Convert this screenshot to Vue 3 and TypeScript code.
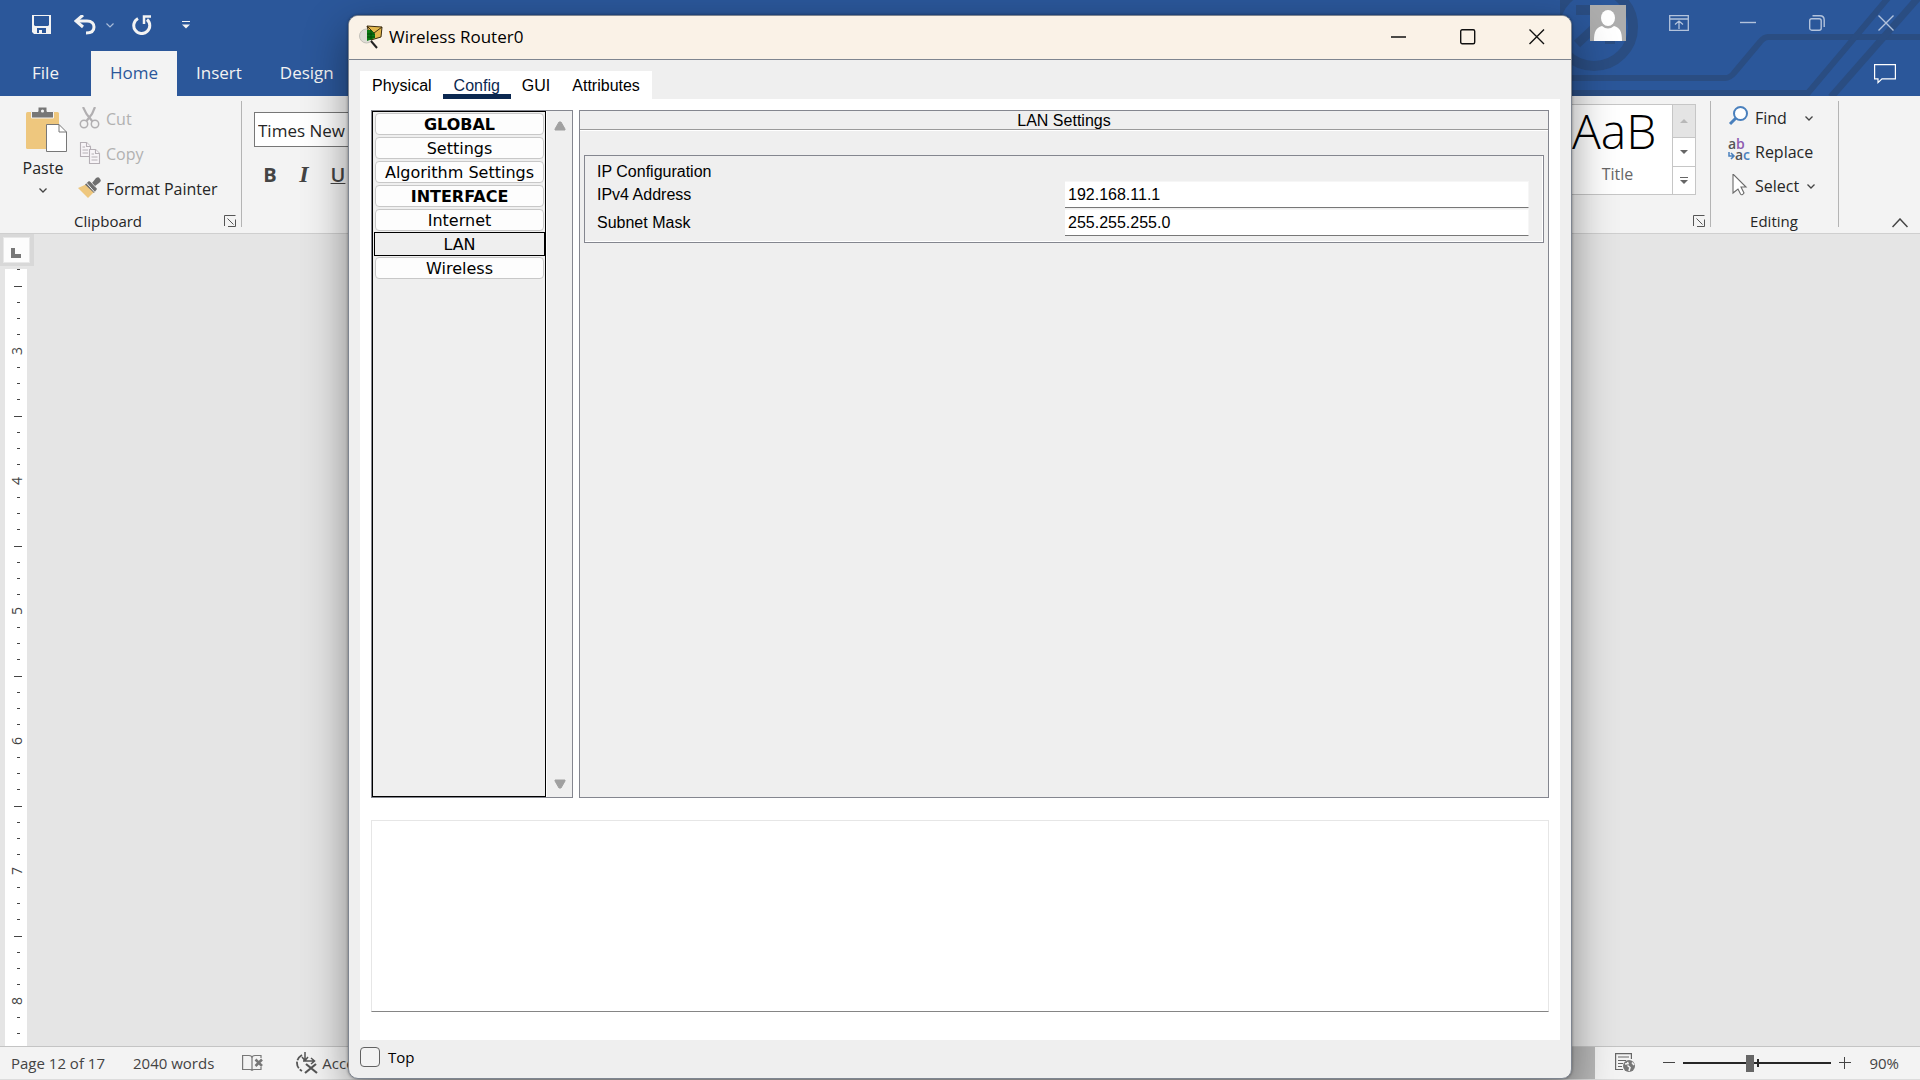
<script setup lang="ts">
import { ref } from 'vue'

const ribbonTabs = ['File', 'Home', 'Insert', 'Design']
const activeRibbonTab = ref('Home')

const rulerNumbers = [3, 4, 5, 6, 7, 8]
const zoomPosition = ref(45)

const dialogTabs = ['Physical', 'Config', 'GUI', 'Attributes']
const activeDialogTab = ref('Config')

interface Section {
  name: string
  heading?: boolean
}
const sections: Section[] = [
  { name: 'GLOBAL', heading: true },
  { name: 'Settings' },
  { name: 'Algorithm Settings' },
  { name: 'INTERFACE', heading: true },
  { name: 'Internet' },
  { name: 'LAN' },
  { name: 'Wireless' },
]
const activeSection = ref('LAN')

const ipv4Address = ref('192.168.11.1')
const subnetMask = ref('255.255.255.0')
const consoleText = ref('')
const keepOnTop = ref(false)
</script>

<template>
  <div class="desktop">
    <div class="word">
      <header class="word-header">
        <svg class="decor" width="360" height="96" viewBox="0 0 360 96" fill="none" stroke="#2a4d82" aria-hidden="true">
          <circle cx="34" cy="27" r="39" stroke-width="10" />
          <path d="M16 10H30" stroke-width="10" />
          <path d="M17 44L45 18" stroke-width="9" />
          <path d="M50 40V44" stroke-width="10" />
          <path d="M0 78H165Q170 78 174 73L200 42Q204 37 208 37H360" stroke-width="6" />
          <path d="M0 93H248L328 -2" stroke-width="6" />
          <path d="M271 97L358 -2" stroke-width="7" />
        </svg>
        <div class="title-row">
          <div class="quick">
            <button class="qa save" aria-label="Save">
              <svg width="20" height="20" viewBox="0 0 20 20"><path d="M0 0H19V19H2L0 17Z" fill="#f3f3f3" /><path d="M2 1H17V10L16 11H3L2 10Z" fill="#2b579a" /><path d="M5 13H14V18H10V15H7V18H5Z" fill="#2b579a" /></svg>
            </button>
            <button class="qa undo" aria-label="Undo">
              <svg width="22" height="20" viewBox="0 0 22 20" fill="none" stroke="#f3f3f3" stroke-width="3"><path d="M2 6H13C18 6 20 9 20 12C20 16 17 18 12 18" /><path d="M9 0L2 6L9 12" /></svg>
            </button>
            <button class="qa undo-more" aria-label="Undo options">
              <svg width="8" height="5" viewBox="0 0 8 5" fill="none" stroke="#a9bcd9" stroke-width="1.2"><path d="M.5 .5L4 4L7.500 .5" /></svg>
            </button>
            <button class="qa redo" aria-label="Repeat">
              <svg width="20" height="20" viewBox="0 0 20 20" fill="none" stroke="#f3f3f3" stroke-width="3"><path d="M6 3.500A8 8 0 1 0 15 4.500" /><path d="M19 1.500H12V9" stroke-width="2.500" /></svg>
            </button>
            <button class="qa customize" aria-label="Customize toolbar">
              <svg width="8" height="8" viewBox="0 0 8 8" fill="#f3f3f3"><path d="M0 0H8V1H0ZM0 3.500H8L4 7.500Z" /></svg>
            </button>
          </div>
          <div class="account">
            <svg class="avatar" width="36" height="36" viewBox="0 0 36 36"><path d="M0 0H36V36H0Z" fill="#adadad" /><ellipse cx="18" cy="13" rx="7" ry="8" fill="#fff" /><path d="M4 36C4 26 6 23 12 21Q18 26 24 21C30 23 32 26 32 36Z" fill="#fff" /></svg>
            <button class="win" aria-label="Ribbon display options">
              <svg width="20" height="16" viewBox="0 0 20 16" fill="none" stroke="#b3c3dc" stroke-width="1.300"><path d="M.7 .7H19.300V15.300H.7ZM.7 4H19.300M10 14V6M6 9.500L10 6L14 9.500" /></svg>
            </button>
            <button class="win" aria-label="Minimize">
              <svg width="16" height="16" viewBox="0 0 16 16" stroke="#b3c3dc" stroke-width="1.400"><path d="M0 7.500H16" /></svg>
            </button>
            <button class="win" aria-label="Restore">
              <svg width="16" height="16" viewBox="0 0 16 16" fill="none" stroke="#b3c3dc" stroke-width="1.400"><rect x=".7" y="3.700" width="11.500" height="11.500" rx="2" /><path d="M3.500 .8H11Q15.200 .8 15.200 5V12" /></svg>
            </button>
            <button class="win" aria-label="Close">
              <svg width="16" height="16" viewBox="0 0 16 16" stroke="#b3c3dc" stroke-width="1.400"><path d="M.5 .5L15.500 15.500M15.500 .5L.5 15.500" /></svg>
            </button>
          </div>
        </div>
        <nav class="ribbon-tabs">
          <button
            v-for="tab in ribbonTabs"
            :key="tab"
            class="ribbon-tab"
            :class="[tab.toLowerCase(), { active: tab === activeRibbonTab }]"
            @click="activeRibbonTab = tab"
          >{{ tab }}</button>
          <button class="comments" aria-label="Comments">
            <svg width="22" height="20" viewBox="0 0 22 20" fill="none" stroke="#fff" stroke-width="1.200"><path d="M.6 .6H21.400V14.800H8L4 18.600V14.800H.6Z" /></svg>
          </button>
        </nav>
      </header>

      <section class="ribbon">
        <div class="group clipboard">
          <div class="group-main">
            <button class="paste">
              <svg width="42" height="46" viewBox="0 0 42 46"><rect x="0" y="5" width="33" height="37" rx="1.500" fill="#eec77e" /><path d="M5.500 11V4.500H12V0H21V4.500H27.500V11Z" fill="#777" stroke="#f3f3f3" stroke-width="1" /><circle cx="16.500" cy="4" r="1.600" fill="#f3f3f3" /><path d="M20.500 17.500H33L40.500 25V44.500H20.500Z" fill="#fff" stroke="#777" /><path d="M33 17.500V25H40.500" fill="none" stroke="#777" /></svg>
              <span>Paste</span>
              <svg width="8" height="5" viewBox="0 0 8 5" fill="none" stroke="#444" stroke-width="1.300"><path d="M.5 .5L4 4L7.500 .5" /></svg>
            </button>
            <div class="commands">
              <button class="command" disabled>
                <svg width="24" height="24" viewBox="0 0 24 24" fill="none" stroke="#b1afb1" stroke-width="1.500"><circle cx="6" cy="17" r="3.700" /><circle cx="17" cy="17" r="3.700" /><path d="M5 0L8.500 7L14.500 14.500" stroke-width="2.200" /><path d="M17 0L14 7L8.500 14" stroke-width="2.200" /></svg>
                Cut
              </button>
              <button class="command" disabled>
                <svg width="24" height="24" viewBox="0 0 24 24" fill="#f7f4f7" stroke="#b5afb5" stroke-width="1.100"><path d="M2.500 .5H8.500L12.500 4.500V14.500H2.500Z" /><path d="M8.500 .5V4.500H12.500M4.500 5H7M4.500 8H10M4.500 11H10" /><path d="M11.500 7.500H17.500L21.500 11.500V21.500H11.500Z" /><path d="M17.500 7.500V11.500H21.500M13.500 12H16M13.500 15H19.500M13.500 18H19.500" /></svg>
                Copy
              </button>
              <button class="command">
                <svg width="24" height="24" viewBox="0 0 24 24"><path d="M0 11L9 7L16 15L10 21Z" fill="#eec77e" /><path d="M7 7.500L11 4L14 6L18 1Q21 -1 22 2Q24 4 21 6L17 9L19 12L16 16Z" fill="#6f6f6f" /><path d="M8.500 6L17 15.500" stroke="#f3f3f3" stroke-width="1" /><path d="M13 5L18 10.500" stroke="#f3f3f3" stroke-width=".8" /></svg>
                Format Painter
              </button>
            </div>
          </div>
          <footer class="group-name">
            <span>Clipboard</span>
            <button class="launcher" aria-label="Clipboard options">
              <svg width="12" height="12" viewBox="0 0 12 12" fill="none" stroke="#555"><path d="M.5 11V.5H11.500M3.500 3.500L9.500 9.500" /><path d="M4 11.500H11.500V4.500" /></svg>
            </button>
          </footer>
        </div>

        <div class="group font">
          <input class="font-name" value="Times New Roman" aria-label="Font name" />
          <div class="styles-row">
            <button class="fmt bold">B</button>
            <button class="fmt italic">I</button>
            <button class="fmt underline">U</button>
          </div>
        </div>

        <div class="group styles">
          <div class="gallery">
            <button class="style-tile">
              <span class="preview">AaB</span>
              <span class="style-name">Title</span>
            </button>
            <div class="gallery-nav">
              <button class="nav-up" disabled aria-label="Previous styles"><svg width="8" height="4" viewBox="0 0 8 4" fill="#b8b8b8"><path d="M4 0L8 4H0Z" /></svg></button>
              <button aria-label="Next styles"><svg width="8" height="4" viewBox="0 0 8 4" fill="#666"><path d="M0 0H8L4 4Z" /></svg></button>
              <button aria-label="All styles"><svg width="8" height="7" viewBox="0 0 8 7" fill="#666"><path d="M0 0H8V1H0ZM0 3H8L4 7Z" /></svg></button>
            </div>
          </div>
          <footer class="group-name">
            <button class="launcher" aria-label="Style options">
              <svg width="12" height="12" viewBox="0 0 12 12" fill="none" stroke="#555"><path d="M.5 11V.5H11.500M3.500 3.500L9.500 9.500" /><path d="M4 11.500H11.500V4.500" /></svg>
            </button>
          </footer>
        </div>

        <div class="group editing">
          <div class="commands">
            <button class="command">
              <svg width="24" height="24" viewBox="0 0 24 24" fill="none" stroke="#4a80bd"><circle cx="13.500" cy="7.500" r="6.500" stroke-width="2" fill="#fff" /><path d="M9 12L3 18" stroke-width="3" /></svg>
              Find
              <svg class="drop wide" width="8" height="5" viewBox="0 0 8 5" fill="none" stroke="#444" stroke-width="1.300"><path d="M.5 .5L4 4L7.500 .5" /></svg>
            </button>
            <button class="command">
              <svg class="replace-icon" width="24" height="24" viewBox="0 0 24 24"><text x="1" y="9" fill="#555">a</text><text x="9" y="9" fill="#8e5bb0">b</text><text x="8" y="20" fill="#555">a</text><text x="16" y="20" fill="#4a80bd">c</text><path d="M2 12V16H6M4 13L7 16L4 19" fill="none" stroke="#4a80bd" stroke-width="1.500" /></svg>
              Replace
            </button>
            <button class="command">
              <svg width="24" height="24" viewBox="0 0 24 24" fill="#fff" stroke="#6a6a6a" stroke-width="1.100"><path d="M6 0L19 13H14L17 19Q15 22 13.500 20L11 15L6 19Z" /></svg>
              Select
              <svg class="drop" width="8" height="5" viewBox="0 0 8 5" fill="none" stroke="#444" stroke-width="1.300"><path d="M.5 .5L4 4L7.500 .5" /></svg>
            </button>
          </div>
          <footer class="group-name"><span>Editing</span></footer>
        </div>

        <div class="ribbon-end">
          <button aria-label="Collapse the ribbon">
            <svg width="16" height="10" viewBox="0 0 16 10" fill="none" stroke="#444" stroke-width="1.500"><path d="M.5 9L8 1L15.500 9" /></svg>
          </button>
        </div>
      </section>

      <main class="workspace">
        <div class="tab-stop">
          <button aria-label="Left tab"><svg width="10" height="10" viewBox="0 0 10 10"><path d="M0 0H4V6H10V10H0Z" fill="#777" /></svg></button>
        </div>
        <div class="ruler">
          <div class="lead"></div>
          <div v-for="n in rulerNumbers" :key="n" class="unit">
            <div class="cell"><i class="tick long"></i></div>
            <div v-for="k in 3" :key="'a' + k" class="cell"><i class="tick"></i></div>
            <div class="cell"><span class="number">{{ n }}</span></div>
            <div v-for="k in 3" :key="'b' + k" class="cell"><i class="tick"></i></div>
          </div>
        </div>
      </main>

      <footer class="status">
        <span class="pages">Page 12 of 17</span>
        <span class="words">2040 words</span>
        <button class="proof" aria-label="Proofing errors">
          <svg width="22" height="18" viewBox="0 0 22 18" fill="none" stroke="#777" stroke-width="1.200"><path d="M10 16L8 15.500H.6V1.500H7Q10 1.500 10 4V17M10 4Q10 1.500 13 1.500H19V4M10 16L12 15.500H19V13" /><path d="M13.500 5.500L20 12M20 5.500L13.500 12" stroke-width="2.500" /></svg>
        </button>
        <button class="access">
          <svg width="22" height="22" viewBox="0 0 22 22" fill="none" stroke="#555" stroke-width="1.800"><path d="M6 3Q1 6 1 11Q1 16 6 19" stroke-dasharray="7 1.500" /><path d="M9 0V8M6 5L9 8.500L12 5M7 9H18M15 6L18.500 9L15 12" stroke-width="1.500" /><path d="M10 12L21 21M20 12L9 21" stroke-width="2.200" /></svg>
          <span>Accessibility</span>
        </button>
        <div class="status-right">
          <button class="view print" aria-label="Print layout"></button>
          <button class="view" aria-label="Web layout">
            <svg width="21" height="20" viewBox="0 0 21 20" fill="none" stroke="#666" stroke-width="1.200"><path d="M8 16.500H.6V.6H16.400V6M3 4H14M3 7.500H11M3 10.500H8M3 13.500H7" /><circle cx="14" cy="13" r="6" fill="#777" stroke="none" /><path d="M10 11L13 10.500L12.500 9M14 18L15 14.500L12.500 12.500M17 9.500L19 12" stroke="#f3f3f3" stroke-width="1.600" /></svg>
          </button>
          <button class="zoom-out" aria-label="Zoom out"><svg width="12" height="12" viewBox="0 0 12 12" stroke="#444"><path d="M0 5.500H12" /></svg></button>
          <input v-model="zoomPosition" class="zoom" type="range" min="0" max="100" aria-label="Zoom" />
          <button class="zoom-in" aria-label="Zoom in"><svg width="12" height="12" viewBox="0 0 12 12" stroke="#444"><path d="M0 5.500H12M5.500 0V12" /></svg></button>
          <span class="percent">90%</span>
        </div>
      </footer>
    </div>

    <section class="dialog" role="dialog" aria-labelledby="dialog-title">
      <header class="dialog-head">
        <svg width="24" height="24" viewBox="0 0 24 24"><circle cx="7.500" cy="11" r="7" fill="#deddd6" stroke="#c2c0b8" /><path d="M8 1L23 2L22 12L12 15Z" fill="#e2b74d" stroke="#3c2c10" /><path d="M8 1L15 8L23 2" fill="none" stroke="#3c2c10" /><path d="M8 5L12 5L16 9V13L8 16Z" fill="#0b7a12" /><path d="M8 9H16M8 12H16M12 5V15" stroke="#033d07" stroke-width=".8" /><path d="M12 16L18 23" stroke="#222" stroke-width="2" /></svg>
        <h1 id="dialog-title">Wireless Router0</h1>
        <button class="win" aria-label="Minimize window"><svg width="16" height="16" viewBox="0 0 16 16" stroke="#111" stroke-width="1.400"><path d="M0 8H15" /></svg></button>
        <button class="win" aria-label="Maximize window"><svg width="16" height="16" viewBox="0 0 16 16" fill="none" stroke="#111" stroke-width="1.400"><rect x=".7" y=".7" width="14" height="14" rx="1.500" /></svg></button>
        <button class="win" aria-label="Close window"><svg width="16" height="16" viewBox="0 0 16 16" stroke="#111" stroke-width="1.400"><path d="M.5 .5L15 15M15 .5L.5 15" /></svg></button>
      </header>

      <nav class="dialog-tabs" role="tablist">
        <button
          v-for="tab in dialogTabs"
          :key="tab"
          role="tab"
          :aria-selected="tab === activeDialogTab"
          :class="{ active: tab === activeDialogTab }"
          @click="activeDialogTab = tab"
        >{{ tab }}</button>
      </nav>

      <div class="panel">
        <div class="config">
          <aside class="side">
            <div class="section-list">
              <button
                v-for="section in sections"
                :key="section.name"
                :class="{ heading: section.heading, active: section.name === activeSection }"
                @click="activeSection = section.name"
              >{{ section.name }}</button>
            </div>
            <div class="scroller">
              <button aria-label="Scroll up"><svg width="12" height="10" viewBox="0 0 12 10" fill="#a0a0a0"><path d="M5 1H7L11 8V9H1V8Z" stroke="#a0a0a0" stroke-linejoin="round" /></svg></button>
              <button aria-label="Scroll down"><svg width="12" height="10" viewBox="0 0 12 10" fill="#a0a0a0"><path d="M1 1H11V2L7 9H5L1 2Z" stroke="#a0a0a0" stroke-linejoin="round" /></svg></button>
            </div>
          </aside>
          <div class="detail">
            <h2>LAN Settings</h2>
            <div class="ip-box" role="group" aria-labelledby="ip-title">
              <h3 id="ip-title">IP Configuration</h3>
              <div class="field">
                <label for="ipv4">IPv4 Address</label>
                <input id="ipv4" v-model="ipv4Address" type="text" />
              </div>
              <div class="field">
                <label for="mask">Subnet Mask</label>
                <input id="mask" v-model="subnetMask" type="text" />
              </div>
            </div>
          </div>
        </div>
        <textarea v-model="consoleText" class="console" aria-label="Equivalent commands"></textarea>
      </div>

      <footer class="dialog-foot">
        <label><input v-model="keepOnTop" type="checkbox" />Top</label>
      </footer>
    </section>
  </div>
</template>

<style>
body {
  margin: 0;
}
</style>

<style scoped>
* {
  box-sizing: border-box;
}
.desktop {
  position: relative;
  min-height: 100vh;
  display: flex;
  flex-direction: column;
  overflow: hidden;
  font-family: "Open Sans", "Noto Sans", sans-serif;
  font-size: 16px;
  color: #262626;
}
button {
  display: flex;
  align-items: center;
  justify-content: center;
  padding: 0;
  border: 0;
  background: none;
  font: inherit;
  color: inherit;
}
svg {
  display: block;
  flex: none;
}
h1,
h2,
h3 {
  margin: 0;
  font-weight: 400;
}

/* Word window */
.word {
  flex: 1;
  display: flex;
  flex-direction: column;
  background: #e5e5e5;
}
.word-header {
  position: relative;
  height: 96px;
  background: #2b579a;
  overflow: hidden;
}
.decor {
  position: absolute;
  top: 0;
  right: 0;
}
.title-row {
  position: relative;
  display: flex;
  justify-content: space-between;
  height: 51px;
}
.quick {
  display: flex;
  align-items: center;
  height: 50px;
  padding-left: 32px;
}
.undo {
  margin-left: 22px;
}
.undo-more {
  margin-left: 10px;
}
.redo {
  margin-left: 18px;
}
.customize {
  margin-left: 30px;
}
.account {
  display: flex;
  align-items: center;
  height: 46px;
}
.avatar {
  margin-right: 18px;
}
.win {
  width: 69px;
  height: 43px;
}
.ribbon-tabs {
  position: relative;
  display: flex;
  height: 45px;
  color: #f3f3f3;
  font-size: 17px;
}
.ribbon-tab {
  padding: 0 19px 3px;
}
.ribbon-tab.file {
  width: 91px;
}
.ribbon-tab.home {
  width: 86px;
}
.ribbon-tab.active {
  background: #f3f3f3;
  color: #2b579a;
}
.comments {
  margin-left: auto;
  margin-right: 24px;
}

.ribbon {
  display: flex;
  height: 138px;
  background: #f3f3f3;
  border-bottom: 1px solid #cfcfcf;
}
.group {
  position: relative;
  display: flex;
  flex-direction: column;
}
.clipboard,
.styles,
.editing {
  padding-top: 5px;
}
.clipboard::after,
.styles::after,
.editing::after {
  content: "";
  position: absolute;
  top: 5px;
  right: 0;
  width: 1px;
  height: 126px;
  background: #b4b4b4;
}
.clipboard {
  width: 242px;
}
.group-main {
  display: flex;
}
.paste {
  flex-direction: column;
  align-items: center;
  justify-content: flex-start;
  width: 78px;
  height: 104px;
  padding-top: 6px;
}
.paste svg:first-child {
  margin-left: 16px;
}
.paste span {
  margin: 4px 0 9px 8px;
  line-height: 22px;
}
.paste svg:last-child {
  margin-left: 8px;
}
.commands {
  display: flex;
  flex-direction: column;
}
.command {
  justify-content: flex-start;
  gap: 4px;
  height: 35px;
}
.command:disabled {
  color: #b1b1b1;
}
.group-name {
  display: flex;
  justify-content: center;
  align-items: center;
  margin-top: auto;
  height: 24px;
  font-size: 15px;
}
.clipboard .group-name {
  justify-content: space-between;
  padding-left: 74px;
  padding-right: 6px;
}
.font {
  flex: 1;
  padding: 16px 0 0 12px;
}
.font-name {
  width: 170px;
  height: 35px;
  padding: 1px 3px 0;
  border: 1px solid #777;
  border-radius: 0;
  background: #fff;
  font: inherit;
  font-size: 17px;
  color: #262626;
}
.styles-row {
  display: flex;
  gap: 16px;
  margin-top: 13px;
  padding-left: 7px;
  font-size: 20px;
  color: #444;
}
.fmt {
  width: 18px;
  height: 28px;
}
.bold {
  font-weight: 700;
}
.italic {
  font-family: "Liberation Serif", serif;
  font-style: italic;
  font-weight: 700;
  font-size: 24px;
}
.underline {
  font-weight: 600;
  text-decoration: underline;
  text-decoration-thickness: 1px;
}
.styles {
  width: 160px;
}
.gallery {
  display: flex;
  height: 91px;
  margin: 3px 15px 0 0;
  border: 1px solid #c6c6c6;
  background: #fff;
}
.style-tile {
  flex: 1;
  flex-direction: column;
  justify-content: flex-start;
  padding-top: 10px;
}
.preview {
  width: 100%;
  height: 38px;
  padding-left: 20px;
  overflow: hidden;
  font-size: 48px;
  font-weight: 300;
  line-height: 32px;
  text-align: left;
  color: #000;
}
.style-name {
  line-height: 22px;
  margin: 10px 0 0 11px;
  color: #666;
}
.gallery-nav {
  display: flex;
  flex-direction: column;
  width: 23px;
  border-left: 1px solid #c6c6c6;
}
.gallery-nav button {
  flex: 1;
}
.gallery-nav .nav-up {
  flex: 0 0 32px;
}
.gallery-nav button + button {
  border-top: 1px solid #c6c6c6;
}
.nav-up {
  background: #e4e4e4;
}
.styles .group-name {
  justify-content: flex-end;
  padding-right: 6px;
}
.editing {
  width: 128px;
  padding-left: 16px;
}
.editing .command {
  height: 34px;
}
.editing .group-name {
  padding-right: 18px;
}
.drop {
  margin-left: 4px;
}
.drop.wide {
  margin-left: 14px;
}
.replace-icon {
  overflow: visible;
  font-size: 14px;
  font-weight: 600;
}
.ribbon-end {
  display: flex;
  justify-content: flex-end;
  align-items: flex-end;
  width: 81px;
  padding: 0 12px 5px 0;
}

.workspace {
  flex: 1;
  display: flex;
  flex-direction: column;
  align-items: flex-start;
}
.tab-stop {
  width: 34px;
  height: 32px;
  padding: 3px;
  background: #d8d8d8;
}
.tab-stop button {
  width: 27px;
  height: 26px;
  padding: 5px 2px 0 0;
  border: 1px solid #e8e8e8;
  background: #fcfcfc;
}
.ruler {
  flex: 1 0 0;
  width: 22px;
  margin: 3px 0 0 5px;
  background: #fff;
  overflow: hidden;
}
.lead {
  width: 3px;
  height: 9px;
  margin-left: 12px;
  border-top: 1px solid #444;
}
.unit {
  display: flex;
  flex-direction: column;
  height: 130px;
}
.cell {
  flex: 1 1 0;
  min-height: 0;
  display: flex;
  align-items: center;
  padding-left: 12px;
}
.tick {
  width: 3px;
  height: 1px;
  background: #444;
}
.tick.long {
  width: 8px;
  margin-left: -3px;
}
.number {
  width: 12px;
  margin-left: -6px;
  line-height: 16px;
  text-align: center;
  font-size: 14px;
  color: #444;
  rotate: -90deg;
}

.status {
  display: flex;
  align-items: center;
  height: 34px;
  background: #f3f3f3;
  border-top: 1px solid #c4c4c4;
  border-bottom: 1px solid #dcdcdc;
  padding-left: 11px;
  font-size: 15px;
  color: #444;
}
.words {
  margin-left: 28px;
}
.proof {
  margin-left: 28px;
}
.access {
  gap: 4px;
  margin-left: 32px;
}
.status-right {
  display: flex;
  align-items: center;
  align-self: stretch;
  margin-left: auto;
  padding-right: 21px;
}
.view.print {
  align-self: stretch;
  width: 46px;
  margin-right: 20px;
  background: #b8b8b8;
}
.zoom-out {
  margin-left: 27px;
}
.zoom {
  appearance: none;
  width: 148px;
  height: 18px;
  margin: 0 8px;
  background:
    linear-gradient(#262626, #262626) 74px 50% / 2px 8px no-repeat,
    linear-gradient(#262626, #262626) 0 50% / 100% 2px no-repeat;
}
.zoom::-webkit-slider-thumb {
  appearance: none;
  width: 8px;
  height: 17px;
  background: #666;
}
.percent {
  margin-left: 18px;
}

/* Router window */
.dialog {
  position: absolute;
  top: 15px;
  bottom: 1px;
  left: 348px;
  right: 348px;
  display: flex;
  flex-direction: column;
  border: 1px solid #7e8590;
  border-radius: 10px;
  background: #efefef;
  box-shadow: 0 0 3px rgba(0, 0, 0, 0.4), 0 16px 44px rgba(0, 0, 0, 0.42);
  overflow: hidden;
  color: #000;
  font-family: "Liberation Sans", Arial, sans-serif;
}
.dialog-head {
  display: flex;
  align-items: center;
  height: 44px;
  padding: 0 0 2px 10px;
  border-bottom: 1px solid #7e8590;
  background: #faf2e7;
}
.dialog-head h1 {
  flex: 1;
  margin-left: 6px;
  font-family: "Open Sans", "Noto Sans", sans-serif;
  font-size: 17px;
}
.dialog-tabs {
  display: flex;
  align-self: flex-start;
  height: 28px;
  margin: 11px 0 0 11px;
  padding: 0 1px;
  background: #fff;
}
.dialog-tabs button {
  padding: 7px 11px 0;
  border-bottom: 5px solid transparent;
}
.dialog-tabs .active {
  border-bottom-color: #0b2850;
  color: #0b2850;
}
.panel {
  flex: 1;
  display: flex;
  flex-direction: column;
  margin: 0 11px;
  padding: 11px 11px 28px;
  background: #fff;
}
.config {
  flex: 1;
  display: flex;
  gap: 6px;
}
.side {
  display: flex;
  width: 202px;
  border: 1px solid #84868f;
  background: #efefef;
}
.section-list {
  display: flex;
  flex-direction: column;
  gap: 2px;
  width: 174px;
  padding: 1px 0 1px 1px;
  border: 1px solid #000;
  font-family: "DejaVu Sans", Verdana, sans-serif;
}
.section-list button {
  height: 22px;
  margin: 0 1px;
  border: 1px solid #c8c8c8;
  border-radius: 4px;
  background: #fdfdfd;
  white-space: nowrap;
}
.section-list .heading {
  font-weight: 700;
}
.section-list .active {
  height: 24px;
  margin: -1px 0;
  border-color: #000;
  border-radius: 0;
  background: #efefef;
}
.scroller {
  flex: 1;
  display: flex;
  flex-direction: column;
  justify-content: space-between;
  align-items: center;
  padding: 10px 0 8px;
  border-left: 1px solid #fff;
}
.detail {
  flex: 1;
  border: 1px solid #84868f;
  background: #efefef;
}
.detail h2 {
  height: 20px;
  border-bottom: 1px solid #fff;
  box-shadow: inset 0 -1px #9a9a9a;
  font-size: 16px;
  line-height: 20px;
  text-align: center;
}
.ip-box {
  margin: 24px 4px 0;
  padding: 5px 14px 5px 12px;
  border: 1px solid #84868f;
  box-shadow: inset -1px -1px #fff;
}
.ip-box h3 {
  height: 20px;
  font-size: 16px;
  line-height: 22px;
}
.field {
  display: grid;
  grid-template-columns: 1fr 1fr;
  column-gap: 4px;
  align-items: center;
  height: 28px;
}
.field input {
  align-self: start;
  height: 27px;
  padding: 0 3px;
  border: 1px solid #f6f6f6;
  border-bottom-color: #777;
  border-left: 0;
  border-radius: 0;
  background: #fff;
  font: inherit;
}
.console {
  display: block;
  height: 192px;
  margin-top: 22px;
  border: 1px solid #e6e6e6;
  border-bottom-color: #858585;
  background: #fff;
  resize: none;
}
.dialog-foot {
  height: 38px;
  padding: 7px 11px;
  font-family: "Open Sans", "Noto Sans", sans-serif;
  font-size: 15px;
}
.dialog-foot label {
  display: flex;
  align-items: center;
  gap: 8px;
  height: 20px;
}
.dialog-foot input {
  appearance: none;
  width: 20px;
  height: 20px;
  margin: 0;
  border: 1px solid #626262;
  border-radius: 4px;
  background: #f3f3f3;
}
</style>
